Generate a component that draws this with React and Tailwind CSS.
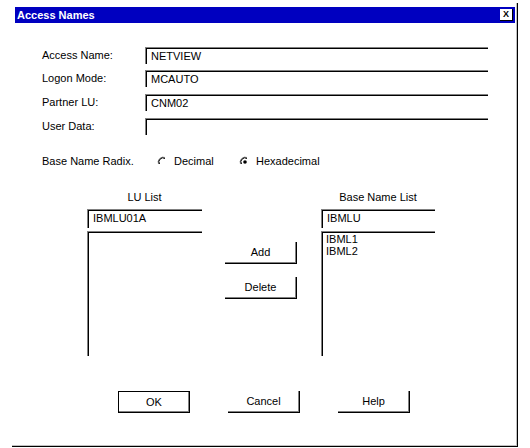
import React from "react";

const font = { fontFamily: '"Liberation Sans", Arial, sans-serif' };

const Field = ({ value, w = "w-[343px]", h = "h-[17px]" }) => (
  <div className={`${w} ${h} border-t border-l border-[#808080] shadow-[inset_1px_1px_0_#000] pl-[5px] pt-[2px] text-[11px] leading-[13px] text-black`}>
    {value}
  </div>
);

const Button = ({ label, def }) => (
  <div
    className={`w-[72px] h-[22px] flex items-center justify-center text-[11px] text-black ${
      def
        ? "border border-black shadow-[inset_-1px_-1px_0_#808080]"
        : "border-r border-b border-black shadow-[inset_-1px_-1px_0_#808080]"
    }`}
  >
    {label}
  </div>
);

const Radio = ({ checked }) => (
  <svg width="12" height="12" viewBox="0 0 12 12" className="shrink-0">
    <path d="M1.5 8 A5 5 0 0 1 8 1.5" fill="none" stroke="#808080" strokeWidth="1" />
    <path d="M2.5 8 A4 4 0 0 1 8 2.5" fill="none" stroke="#000" strokeWidth="1" />
    {checked && <circle cx="6" cy="6" r="1.8" fill="#000" />}
  </svg>
);

export default function App() {
  const rows = [
    ["Access Name:", "NETVIEW", "mt-[24px]"],
    ["Logon Mode:", "MCAUTO", "mt-[6px]"],
    ["Partner LU:", "CNM02", "mt-[7px]"],
    ["User Data:", "", "mt-[7px]"],
  ];

  return (
    <div className="w-[530px] h-[448px] bg-white pl-[12px] pt-[3px] overflow-hidden" style={font}>
      <div className="w-[506px] h-[444px] border-r border-b border-black shadow-[inset_-1px_-1px_0_#c0c0c0] pl-[3px] pt-[4px]">
        {/* title bar */}
        <div className="w-[500px] h-[16px] bg-[#0000c0] flex items-center justify-between pl-[2px] pr-[2px]">
          <span className="text-white text-[11px] font-bold leading-none">Access Names</span>
          <div className="w-[13px] h-[12px] bg-white border-r border-b border-black flex items-center justify-center text-[9px] font-bold leading-none text-black">
            X
          </div>
        </div>

        {/* fields */}
        <div className="flex flex-col pl-[27px]">
          {rows.map(([label, value, mt]) => (
            <div key={label} className={`flex items-center ${mt}`}>
              <span className="w-[103px] text-[11px] text-black">{label}</span>
              <Field value={value} />
            </div>
          ))}
        </div>

        {/* radix */}
        <div className="flex items-center pl-[27px] mt-[20px] h-[13px] text-[11px] text-black">
          <span className="w-[115px]">Base Name Radix.</span>
          <Radio />
          <span className="ml-[5px] w-[65px]">Decimal</span>
          <Radio checked />
          <span className="ml-[5px]">Hexadecimal</span>
        </div>

        {/* lists */}
        <div className="flex pl-[72px] mt-[23px]">
          <div className="w-[115px] flex flex-col items-center">
            <span className="text-[11px] leading-[13px] text-black">LU List</span>
            <div className="mt-[5px] w-full">
              <Field value="IBMLU01A" w="w-full" h="h-[19px]" />
            </div>
            <div className="mt-[3px] w-full h-[125px] border-t border-l border-[#808080] shadow-[inset_1px_1px_0_#000]" />
          </div>

          <div className="ml-[23px] pt-[51px] flex flex-col gap-[13px]">
            <Button label="Add" />
            <Button label="Delete" />
          </div>

          <div className="ml-[24px] w-[114px] flex flex-col items-center">
            <span className="text-[11px] leading-[13px] text-black">Base Name List</span>
            <div className="mt-[5px] w-full">
              <Field value="IBMLU" w="w-full" h="h-[19px]" />
            </div>
            <div className="mt-[3px] w-full h-[125px] border-t border-l border-[#808080] shadow-[inset_1px_1px_0_#000] pl-[4px] pt-[1px] text-[11px] leading-[12px] text-black">
              <div>IBML1</div>
              <div>IBML2</div>
            </div>
          </div>
        </div>

        {/* bottom buttons */}
        <div className="flex pl-[103px] mt-[35px] gap-[38px]">
          <Button label="OK" def />
          <Button label="Cancel" />
          <Button label="Help" />
        </div>
      </div>
    </div>
  );
}
